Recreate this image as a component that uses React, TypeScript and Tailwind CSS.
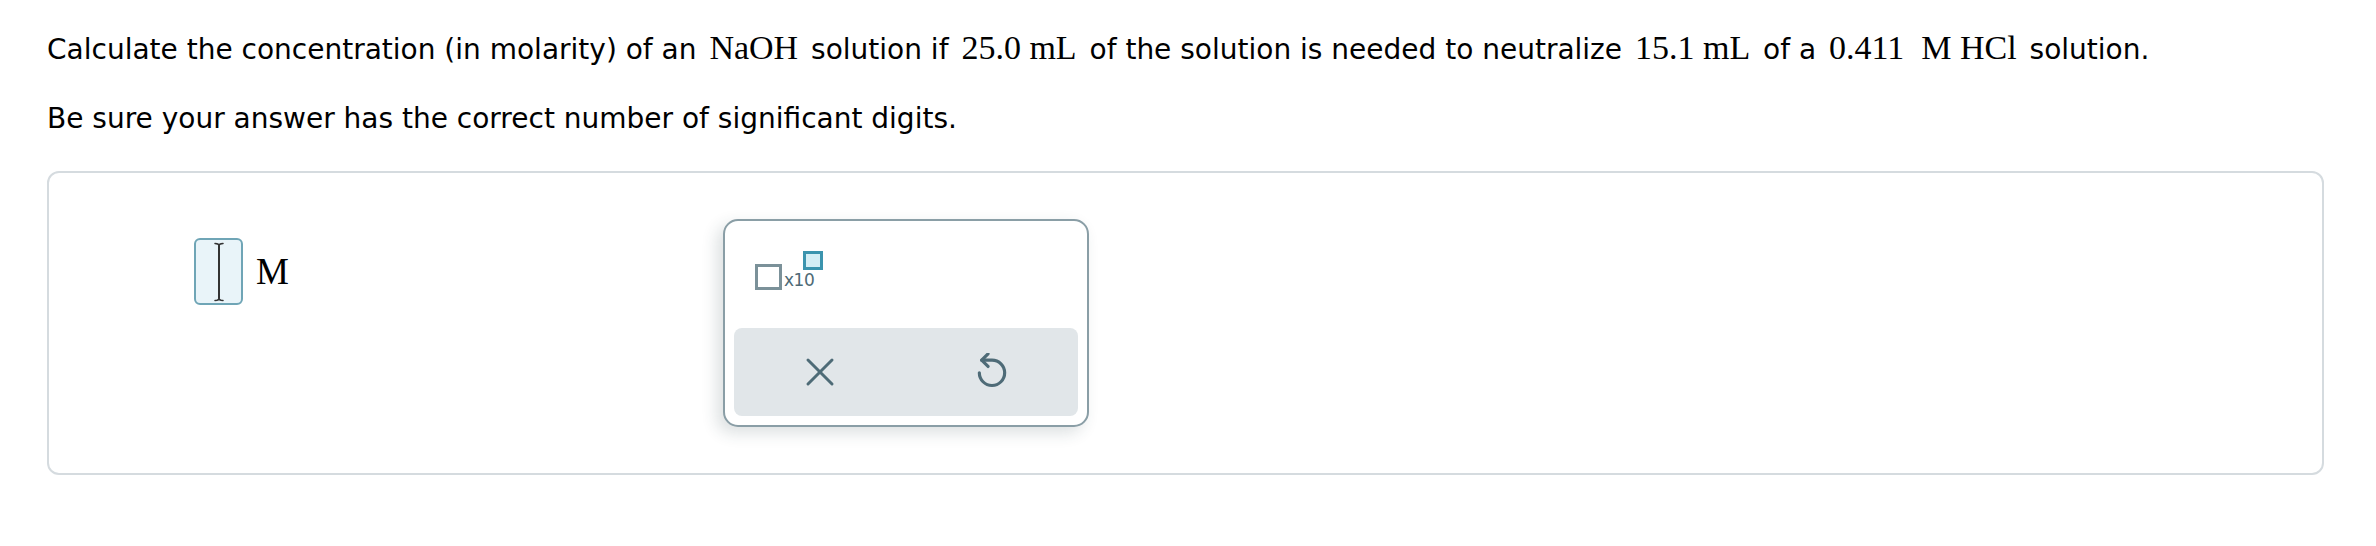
import React from 'react';

const sans = "font-['DejaVu_Sans',Verdana,sans-serif]";
const serif = "font-['Liberation_Serif','Times_New_Roman',serif]";

const M = ({ children }: { children: React.ReactNode }) => (
  <span className={`${serif} text-[34px] mx-[4px]`}>{children}</span>
);

const CloseIcon = () => (
  <svg width="48" height="48" viewBox="0 0 24 24" fill="none" stroke="#4e6b77" strokeWidth="1.5" strokeLinecap="round">
    <path d="M18 6 6 18" />
    <path d="M6 6l12 12" />
  </svg>
);

const UndoIcon = () => (
  <svg width="38" height="38" viewBox="0 1.5 24 24" fill="none" stroke="#4e6b77" strokeWidth="2" strokeLinecap="round" strokeLinejoin="round">
    <path d="M5.5 6H12a8 8 0 1 1-8 8" />
    <path d="M9.5 2 5.5 6l4 4" />
  </svg>
);

const Keypad = () => (
  <div className="absolute left-[674px] top-[46px] w-[366px] h-[208px] rounded-[15px] border-2 border-[#8a9ea6] bg-white shadow-[-6px_6px_16px_rgba(40,60,70,0.16)] p-[9px] flex flex-col">
    <div className="flex-1 relative">
      <div className="absolute left-[21px] top-[21px] flex items-end">
        <div className="w-[27px] h-[26px] border-[3px] border-[#7b9199]" />
        <span className={`${sans} text-[17px] leading-none text-[#4e6a76] ml-[2px] mb-[1px] tracking-[-0.5px]`}>x10</span>
        <div className="w-[20px] h-[19px] border-[3px] border-[#3b94ae] bg-[#d4eef5] -ml-[11px] mb-[20px]" />
      </div>
    </div>
    <div className="h-[88px] rounded-[8px] bg-[#e1e6e9] grid grid-cols-2">
      <div className="flex items-center justify-center">
        <CloseIcon />
      </div>
      <div className="flex items-center justify-center">
        <UndoIcon />
      </div>
    </div>
  </div>
);

export default function App() {
  return (
    <div className={`${sans} bg-white text-black w-[2376px] h-[546px] pl-[47px] pr-[52px] pt-[30px]`}>
      <p className="text-[28px] leading-[36px] whitespace-nowrap">
        Calculate the concentration (in molarity) of an <M>NaOH</M> solution if <M>25.0 mL</M> of the solution is needed to neutralize <M>15.1 mL</M> of a <M>0.411&nbsp; M HCl</M> solution.
      </p>
      <p className="text-[28px] leading-[36px] mt-[33px]">Be sure your answer has the correct number of significant digits.</p>
      <div className="relative mt-[34px] h-[304px] rounded-[12px] border-2 border-[#d5dbdf]">
        <div className="flex items-center pl-[145px] pt-[65px]">
          <div className="relative w-[49px] h-[67px] rounded-[6px] border-2 border-[#6fa5b6] bg-[#e9f4f9] flex justify-center">
            <svg width="14" height="62" viewBox="0 0 14 62" className="mt-[1px]" fill="none" stroke="#333" strokeWidth="2" strokeLinecap="round">
              <path d="M7 5v52" />
              <path d="M3 2.5q4 0 4 2.5q0-2.5 4-2.5" strokeWidth="1.5" />
              <path d="M3 59.5q4 0 4-2.5q0 2.5 4 2.5" strokeWidth="1.5" />
            </svg>
          </div>
          <span className={`${serif} text-[37px] leading-none ml-[13px]`}>M</span>
        </div>
        <Keypad />
      </div>
    </div>
  );
}
